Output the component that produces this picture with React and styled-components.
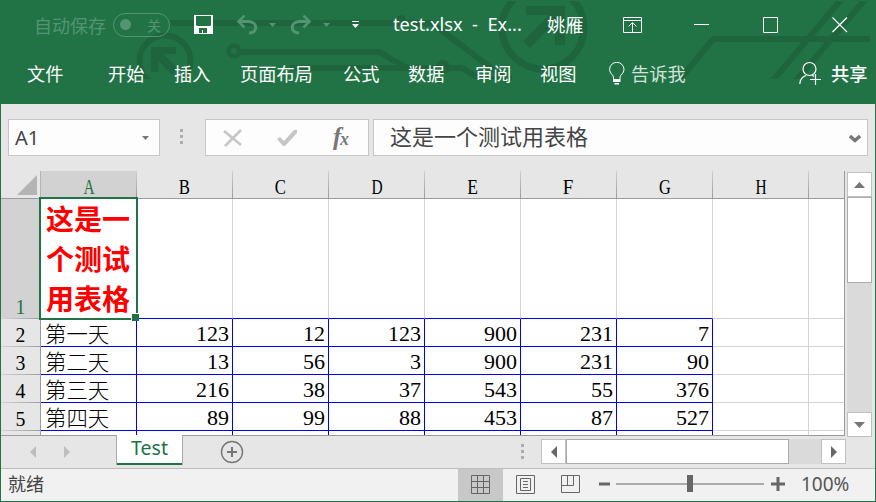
import React from 'react';
import styled, { createGlobalStyle } from 'styled-components';

const GREEN = '#217346';
const UI = '"Noto Sans", "Noto Sans CJK SC", sans-serif';
const CJK = '"Noto Sans CJK SC", sans-serif';

const Global = createGlobalStyle`
  * { box-sizing: border-box; }
  body { margin: 0; overflow: hidden; }
  svg { display: block; }
`;

const Window = styled.div`
  width: 876px;
  height: 502px;
  border: solid ${GREEN};
  border-width: 0 1px 1px;
  background: #e6e6e6;
  display: flex;
  flex-direction: column;
  font-family: ${UI};
  overflow: hidden;
  white-space: nowrap;
`;

const Ribbon = styled.header`
  position: relative;
  flex: 0 0 104px;
  background: ${GREEN};
  color: #fff;
`;

const Circuit = styled.svg`
  position: absolute;
  left: -1px;
  top: 0;
`;

const TitleRow = styled.div`
  position: relative;
  height: 49px;
  display: flex;
  align-items: center;
`;

const TabRow = styled(TitleRow)`
  height: 48px;
`;

const Slot = styled.div`
  flex: 0 0 ${p => p.$w}px;
  margin-left: ${p => p.$gap || 0}px;
`;

const Label = styled(Slot)`
  font: ${p => p.$weight || 400} ${p => p.$size || 18.2}px/26px ${p => (p.$latin ? UI : CJK)};
  color: ${p => p.$color || '#fff'};
  padding-bottom: ${p => p.$lift || 0}px;
`;

const Toggle = styled(Slot)`
  height: 24px;
  border: 1px solid #539572;
  border-radius: 12px;
  display: flex;
  align-items: center;
  justify-content: space-between;
  padding: 0 8px 0 6px;
  font: 14px/22px ${CJK};
  color: #539572;
`;

const Knob = styled.span`
  width: 11px;
  height: 11px;
  border-radius: 50%;
  background: #539572;
`;

const FormulaBar = styled.div`
  flex: 0 0 67px;
  display: flex;
  padding: 15px 7px 0;
`;

const Field = styled.div`
  height: 37px;
  border: 1px solid #c6c6c6;
  background: #fdfdfd;
  display: flex;
  align-items: center;
  color: #444;
`;

const NameBox = styled(Field)`
  width: 152px;
  padding: 0 10px 0 6px;
  justify-content: space-between;
  font-size: 20px;
`;

const FormulaButtons = styled(Field)`
  width: 164px;
  padding: 0 17px;
  justify-content: space-between;
`;

const FunctionIcon = styled.svg`
  overflow: visible;
`;

const FormulaInput = styled(Field)`
  width: 495px;
  margin-left: 4px;
  padding: 0 6px 5px 16px;
  justify-content: space-between;
  font: 22px/30px ${CJK};
  svg { margin-top: 4px; }
`;

const Grip = styled.div`
  width: 4px;
  display: grid;
  grid-auto-rows: 3px;
  row-gap: 3px;
  margin: ${p => p.$m};
  &::before, &::after { content: ''; }
  &::before, &::after, span { width: 3px; height: 3px; background: #adadad; }
`;

const Main = styled.div`
  flex: 0 0 265px;
  min-height: 0;
  height: 265px;
  display: flex;
`;

const Sheet = styled.div`
  width: 844px;
  height: 265px;
  display: grid;
  grid-template-columns: 40px repeat(8, 96px) 36px;
  grid-template-rows: 28px 120px repeat(4, 28px) 5px;
  overflow: hidden;
  border-right: 1px solid #9b9b9b;
  border-bottom: 1px solid #9b9b9b;
`;

const Corner = styled.div`
  border-bottom: 1px solid #9b9b9b;
  border-right: 1px solid #b5b5b5;
  display: flex;
  align-items: flex-end;
  justify-content: flex-end;
  padding: 0 3px 3px 0;
`;

const ColHead = styled.div`
  font: 22px/32px "Liberation Serif", serif;
  text-align: center;
  padding-right: 1px;
  color: ${p => (p.$active ? GREEN : '#000')};
  background:
    linear-gradient(to bottom, #cfcfcf, #999) right top / 1px 100% no-repeat,
    linear-gradient(#9b9b9b, #9b9b9b) left bottom / 100% 1px no-repeat,
    ${p => (p.$active ? '#d2d2d2' : '#e6e6e6')};
  span { display: inline-block; transform: scaleX(${p => p.$squeeze}); }
`;

const RowHead = styled.div`
  font: 22px/25px "Liberation Serif", serif;
  display: flex;
  align-items: flex-end;
  justify-content: center;
  padding-right: 2px;
  color: ${p => (p.$active ? GREEN : '#000')};
  background:
    linear-gradient(#9b9b9b, #9b9b9b) right top / 1px 100% no-repeat,
    linear-gradient(to right, #d4d4d4, #9b9b9b) left bottom / 100% 1px no-repeat,
    ${p => (p.$active ? '#d2d2d2' : '#e6e6e6')};
  span { display: inline-block; transform: scaleX(0.9); }
`;

const Cell = styled.div`
  background: #fff;
  border-right: 1px solid ${p => (p.$right ? '#0000f5' : '#d4d4d4')};
  border-bottom: 1px solid ${p => (p.$bottom ? '#0000f5' : '#d4d4d4')};
  font: 22px/30px "Liberation Serif", "Noto Sans CJK SC", serif;
  color: #000;
  text-align: right;
  padding: 0 3px 0 0;
`;

const DayCell = styled(Cell)`
  font: 300 21.4px/27px ${CJK};
  text-align: left;
  padding: 0 0 0 4px;
`;

const SelectedCell = styled.div`
  position: relative;
  z-index: 1;
  margin: -2px -1px -1px -2px;
  width: 99px;
  height: 123px;
  border: 2px solid ${GREEN};
  background: #fff;
  color: #f00;
  font: 700 28px/40px ${CJK};
  padding: 0 0 0 5px;
  white-space: normal;
  &::after {
    content: '';
    position: absolute;
    right: -3px;
    bottom: -3px;
    width: 7px;
    height: 7px;
    background: ${GREEN};
    border: solid #fff;
    border-width: 1px 0 0 1px;
  }
`;

const Heading = styled.div`
  margin-top: -1px;
`;

const VScroll = styled.div`
  width: 25px;
  height: 265px;
  margin: 1px 0 0 2px;
  background: #dadada;
  display: flex;
  flex-direction: column;
`;

const Arrow = styled.div`
  flex: 0 0 25px;
  width: 25px;
  height: 25px;
  background: #fff;
  border: 1px solid #c0c0c0;
  display: flex;
  align-items: center;
  justify-content: center;
  svg { transform: rotate(${p => p.$turn || 0}deg); }
`;

const VThumb = styled.div`
  height: 86px;
  margin-bottom: 129px;
  background: #fff;
  border: 1px solid #ababab;
`;

const SheetBar = styled.div`
  flex: 0 0 32px;
  height: 32px;
  display: flex;
  padding-left: 29px;
`;

const SheetNav = styled.div`
  width: 86px;
  padding-top: 10px;
  display: flex;
  gap: 28px;
`;

const SheetTab = styled.div`
  height: 30px;
  width: 67px;
  margin-top: -1px;
  position: relative;
  background: #fff;
  border: solid #ababab;
  border-width: 0 1px;
  box-shadow: inset 0 -2px ${GREEN};
  color: ${GREEN};
  text-align: center;
  font: 19.5px/26px ${UI};
`;

const AddSheet = styled.div`
  width: 24px;
  margin: 4px 277px 0 37px;
`;

const HScroll = styled.div`
  width: 305px;
  height: 25px;
  margin: 3px 0 0 16px;
  background: #dadada;
  display: flex;
`;

const HThumb = styled.div`
  width: 223px;
  margin-right: 32px;
  background: #fff;
  border: 1px solid #ababab;
`;

const StatusBar = styled.footer`
  flex: 0 0 33px;
  border-top: 1px solid #bdbdbd;
  background: #f1f1f1;
  display: flex;
  align-items: center;
  color: #444;
`;

const StatusText = styled.div`
  width: 457px;
  padding: 0 0 4px 7px;
  font: 18px/26px ${CJK};
`;

const ViewButton = styled.div`
  width: 45px;
  height: 32px;
  display: flex;
  align-items: center;
  justify-content: center;
  padding-bottom: 1px;
  background: ${p => (p.$active ? '#c8c8c8' : 'transparent')};
`;

const Zoom = styled.div`
  display: flex;
  align-items: center;
  padding: 0 0 2px 5px;
`;

const Percent = styled.div`
  margin-left: 16px;
  font: 19px/26px ${UI};
  color: #555;
`;

const Triangle = ({ w = 11, h = 6, color = '#777' }) => (
  <svg width={w} height={h} viewBox="0 0 10 10" preserveAspectRatio="none">
    <path d="M0 0H10L5 10Z" fill={color} />
  </svg>
);

const SideTriangle = ({ left, color = '#666' }) => (
  <svg width="6" height="12" viewBox="0 0 6 12">
    <path d={left ? 'M6 0V12L0 6Z' : 'M0 0V12L6 6Z'} fill={color} />
  </svg>
);

const CircuitArt = () => (
  <Circuit width="876" height="104" fill="none" stroke="#1e653e" strokeWidth="6">
    <clipPath id="band"><path d="M0 1H870V79H0Z" /></clipPath>
    <g clipPath="url(#band)">
      <path d="M170 23H432L512 84" />
      <circle cx="401" cy="20" r="5" fill="#1e653e" stroke="none" />
      <circle cx="234" cy="51" r="5.3" strokeWidth="4.5" />
      <path d="M240 52H379L407 68M290 68H462L480 79H512" />
      <circle cx="443" cy="67" r="7" fill="#1e653e" stroke="none" />
      <circle cx="165" cy="61" r="25.5" />
      <path d="M151 47H176V54H163.5L178 69L172 75L158.5 61V72H151Z" fill="#1e653e" stroke="none" />
      <circle cx="543" cy="28" r="41" strokeWidth="7" />
      <path d="M526 6H565V45H555V22L530 48L523 41L549 15H526Z" fill="#1e653e" stroke="none" />
      <path d="M870 39H713L680 79M844 -4L770 84M868 -4L793 84" />
    </g>
  </Circuit>
);

const SaveIcon = () => (
  <svg width="19" height="19">
    <path d="M0 0H19V19H0Z" fill="#fff" />
    <path d="M2 1H17V10L16 11H3L2 10ZM5 13H13V18H9V15H8V18H5Z" fill={GREEN} />
  </svg>
);

const UndoIcon = ({ flip }) => (
  <svg width="22" height="20" fill="none" stroke="#539572" strokeWidth="3">
    <g transform={flip ? 'translate(22 0) scale(-1 1)' : undefined}>
      <path d="M2 6.5H13C22 7 22 18 13 18" />
      <path d="M8.5 0.5L2.5 6.5L8.5 12.5" strokeWidth="2.5" />
    </g>
  </svg>
);

const days = [
  ['第一天', 123, 12, 123, 900, 231, 7],
  ['第二天', 13, 56, 3, 900, 231, 90],
  ['第三天', 216, 38, 37, 543, 55, 376],
  ['第四天', 89, 99, 88, 453, 87, 527],
];

const columns = [['A', 0.7], ['B', 0.76], ['C', 0.76], ['D', 0.7], ['E', 0.8], ['F', 0.86], ['G', 0.74], ['H', 0.7]];

const tabs = [
  ['文件', 26, 37], ['开始', 44, 37], ['插入', 29, 37], ['页面布局', 29, 74],
  ['公式', 29, 37], ['数据', 28, 37], ['审阅', 30, 37], ['视图', 28, 37],
];

export default function App() {
  return (
    <Window>
      <Global />
      <Ribbon>
        <CircuitArt />
        <TitleRow>
          <Label $gap={33} $w={73} $size={18} $color="#539572">自动保存</Label>
          <Toggle $gap={6} $w={57}><Knob />关</Toggle>
          <Slot $gap={24} $w={20}><SaveIcon /></Slot>
          <Slot $gap={22} $w={22}><UndoIcon /></Slot>
          <Slot $gap={11} $w={7}><Triangle w={7} h={4} color="#539572" /></Slot>
          <Slot $gap={14} $w={22}><UndoIcon flip /></Slot>
          <Slot $gap={11} $w={7}><Triangle w={7} h={4} color="#539572" /></Slot>
          <Slot $gap={22} $w={7}>
            <svg width="7" height="7"><path d="M0 0H7V1H0ZM0 3H7L3.5 7Z" fill="#fff" /></svg>
          </Slot>
          <Label $gap={34} $w={154} $size={18.2} $lift={1} $latin>test.xlsx&nbsp; -&nbsp; Ex...</Label>
          <Label $w={76} $size={18.3} $lift={1}>姚雁</Label>
          <Slot $w={71}>
            <svg width="19" height="16" fill="none" stroke="#fff">
              <path d="M.5 .5H18.5V15.5H.5ZM.5 3.5H18.5M9.5 15V6M5.5 9.5L9.5 5.5L13.5 9.5" />
            </svg>
          </Slot>
          <Slot $w={69}><svg width="15" height="1"><path d="M0 0H15V1H0Z" fill="#fff" /></svg></Slot>
          <Slot $w={69}><svg width="15" height="16"><path d="M.5 .5H14.5V15.5H.5Z" fill="none" stroke="#fff" /></svg></Slot>
          <Slot $w={16}><svg width="16" height="16"><path d="M.5 .5L15 15M15 .5L.5 15" stroke="#fff" strokeWidth="1.2" /></svg></Slot>
        </TitleRow>
        <TabRow>
          {tabs.map(([name, gap, w]) => <Label key={name} $gap={gap} $w={w}>{name}</Label>)}
          <Slot $gap={32} $w={22}>
            <svg width="16" height="23" fill="none" stroke="#fff">
              <path d="M4.5 17V15C4 12.5.6 11.5.6 7.5A7 7 0 0 1 15 7.5C15 11.5 11.5 12.5 11 15V17" />
              <path d="M4 17H11.5V20H4ZM5.5 21H10V22.5H5.5Z" fill="#fff" stroke="none" />
            </svg>
          </Slot>
          <Label $w={168} $color="#d3e3da">告诉我</Label>
          <Slot $w={32}>
            <svg width="23" height="24" fill="none" stroke="#fff" strokeWidth="1.2">
              <circle cx="10.5" cy="8" r="6.5" />
              <path d="M.8 23C1 18.5 4 15.5 7 14.5M13 14L15 15.5M11 18.5H22M16.5 13V24" />
            </svg>
          </Slot>
          <Label $w={38} $weight={500}>共享</Label>
        </TabRow>
      </Ribbon>

      <FormulaBar>
        <NameBox>A1<Triangle w={7} h={4} /></NameBox>
        <Grip $m="10px 21px 0 20px"><span /></Grip>
        <FormulaButtons>
          <svg width="20" height="18" fill="none" stroke="#c6c6c6" strokeWidth="2.6"><path d="M1 2L18 16M18 1L2 17" /></svg>
          <svg width="20" height="18"><path d="M0 10L3 8L7 12L17 1H20V4L8 17H6Z" fill="#c6c6c6" /></svg>
          <FunctionIcon width="21" height="26" fill="#777" fontFamily="Liberation Serif" fontStyle="italic" fontWeight="700">
            <text x="3" y="20" fontSize="25">f</text><text x="10" y="20" fontSize="18">x</text>
          </FunctionIcon>
        </FormulaButtons>
        <FormulaInput>
          这是一个测试用表格
          <svg width="12" height="13" fill="none" stroke="#777" strokeWidth="3.4"><path d="M1 5L6 9.5L11 5" /></svg>
        </FormulaInput>
      </FormulaBar>

      <Main>
        <Sheet>
          <Corner><svg width="20" height="20"><path d="M20 0V20H0Z" fill="#b4b4b4" /></svg></Corner>
          {columns.map(([c, s]) => <ColHead key={c} $active={c === 'A'} $squeeze={s}><span>{c}</span></ColHead>)}
          <ColHead $squeeze={1} />
          <RowHead $active><span>1</span></RowHead>
          <SelectedCell><Heading>这是一个测试用表格</Heading></SelectedCell>
          {[1, 2, 3, 4, 5, 6, 7, 8].map(i => <Cell key={i} $bottom={i < 7} />)}
          {days.map(([day, ...values], r) => (
            <React.Fragment key={day}>
              <RowHead><span>{r + 2}</span></RowHead>
              <DayCell $right $bottom>{day}</DayCell>
              {values.map((v, i) => <Cell key={i} $right $bottom>{v}</Cell>)}
              <Cell />
              <Cell />
            </React.Fragment>
          ))}
          <RowHead />
          {[0, 1, 2, 3, 4, 5, 6, 7, 8].map(i => <Cell key={i} $right={i < 7} />)}
        </Sheet>
        <VScroll>
          <Arrow $turn={180}><Triangle /></Arrow>
          <VThumb />
          <Arrow><Triangle /></Arrow>
        </VScroll>
      </Main>

      <SheetBar>
        <SheetNav>
          <SideTriangle left color="#bdbdbd" />
          <SideTriangle color="#bdbdbd" />
        </SheetNav>
        <SheetTab>Test</SheetTab>
        <AddSheet>
          <svg width="24" height="24" fill="none" stroke="#777">
            <circle cx="12" cy="12" r="10.5" strokeWidth="1.4" />
            <path d="M7 12H17M12 7V17" strokeWidth="2" />
          </svg>
        </AddSheet>
        <Grip $m="8px 0 0 0"><span /></Grip>
        <HScroll>
          <Arrow><SideTriangle left /></Arrow>
          <HThumb />
          <Arrow><SideTriangle /></Arrow>
        </HScroll>
      </SheetBar>

      <StatusBar>
        <StatusText>就绪</StatusText>
        <ViewButton $active>
          <svg width="19" height="19" fill="none" stroke="#666"><path d="M.5 .5H18.5V18.5H.5ZM.5 6.5H18.5M.5 12.5H18.5M6.5 0V19M12.5 0V19" /></svg>
        </ViewButton>
        <ViewButton>
          <svg width="19" height="19" fill="none" stroke="#666"><path d="M.5 .5H18.5V18.5H.5ZM4.5 3.5H14.5V15.5H4.5ZM7 6.5H12M7 9.5H12M7 12.5H12" /></svg>
        </ViewButton>
        <ViewButton>
          <svg width="19" height="19" fill="none" stroke="#666"><path d="M.5 .5H18.5V17.5H.5ZM.5 10.5H12.5V.5M6.5 .5V10.5" /></svg>
        </ViewButton>
        <Zoom>
          <svg width="187" height="20">
            <path d="M1 8.5H12V11.5H1ZM173 8.5H187V11.5H173ZM178.5 3H181.5V17H178.5Z" fill="#666" />
            <path d="M18 9H166V11H18Z" fill="#ababab" />
            <path d="M89 1H95V18H89Z" fill="#666" />
          </svg>
          <Percent>100%</Percent>
        </Zoom>
      </StatusBar>
    </Window>
  );
}
